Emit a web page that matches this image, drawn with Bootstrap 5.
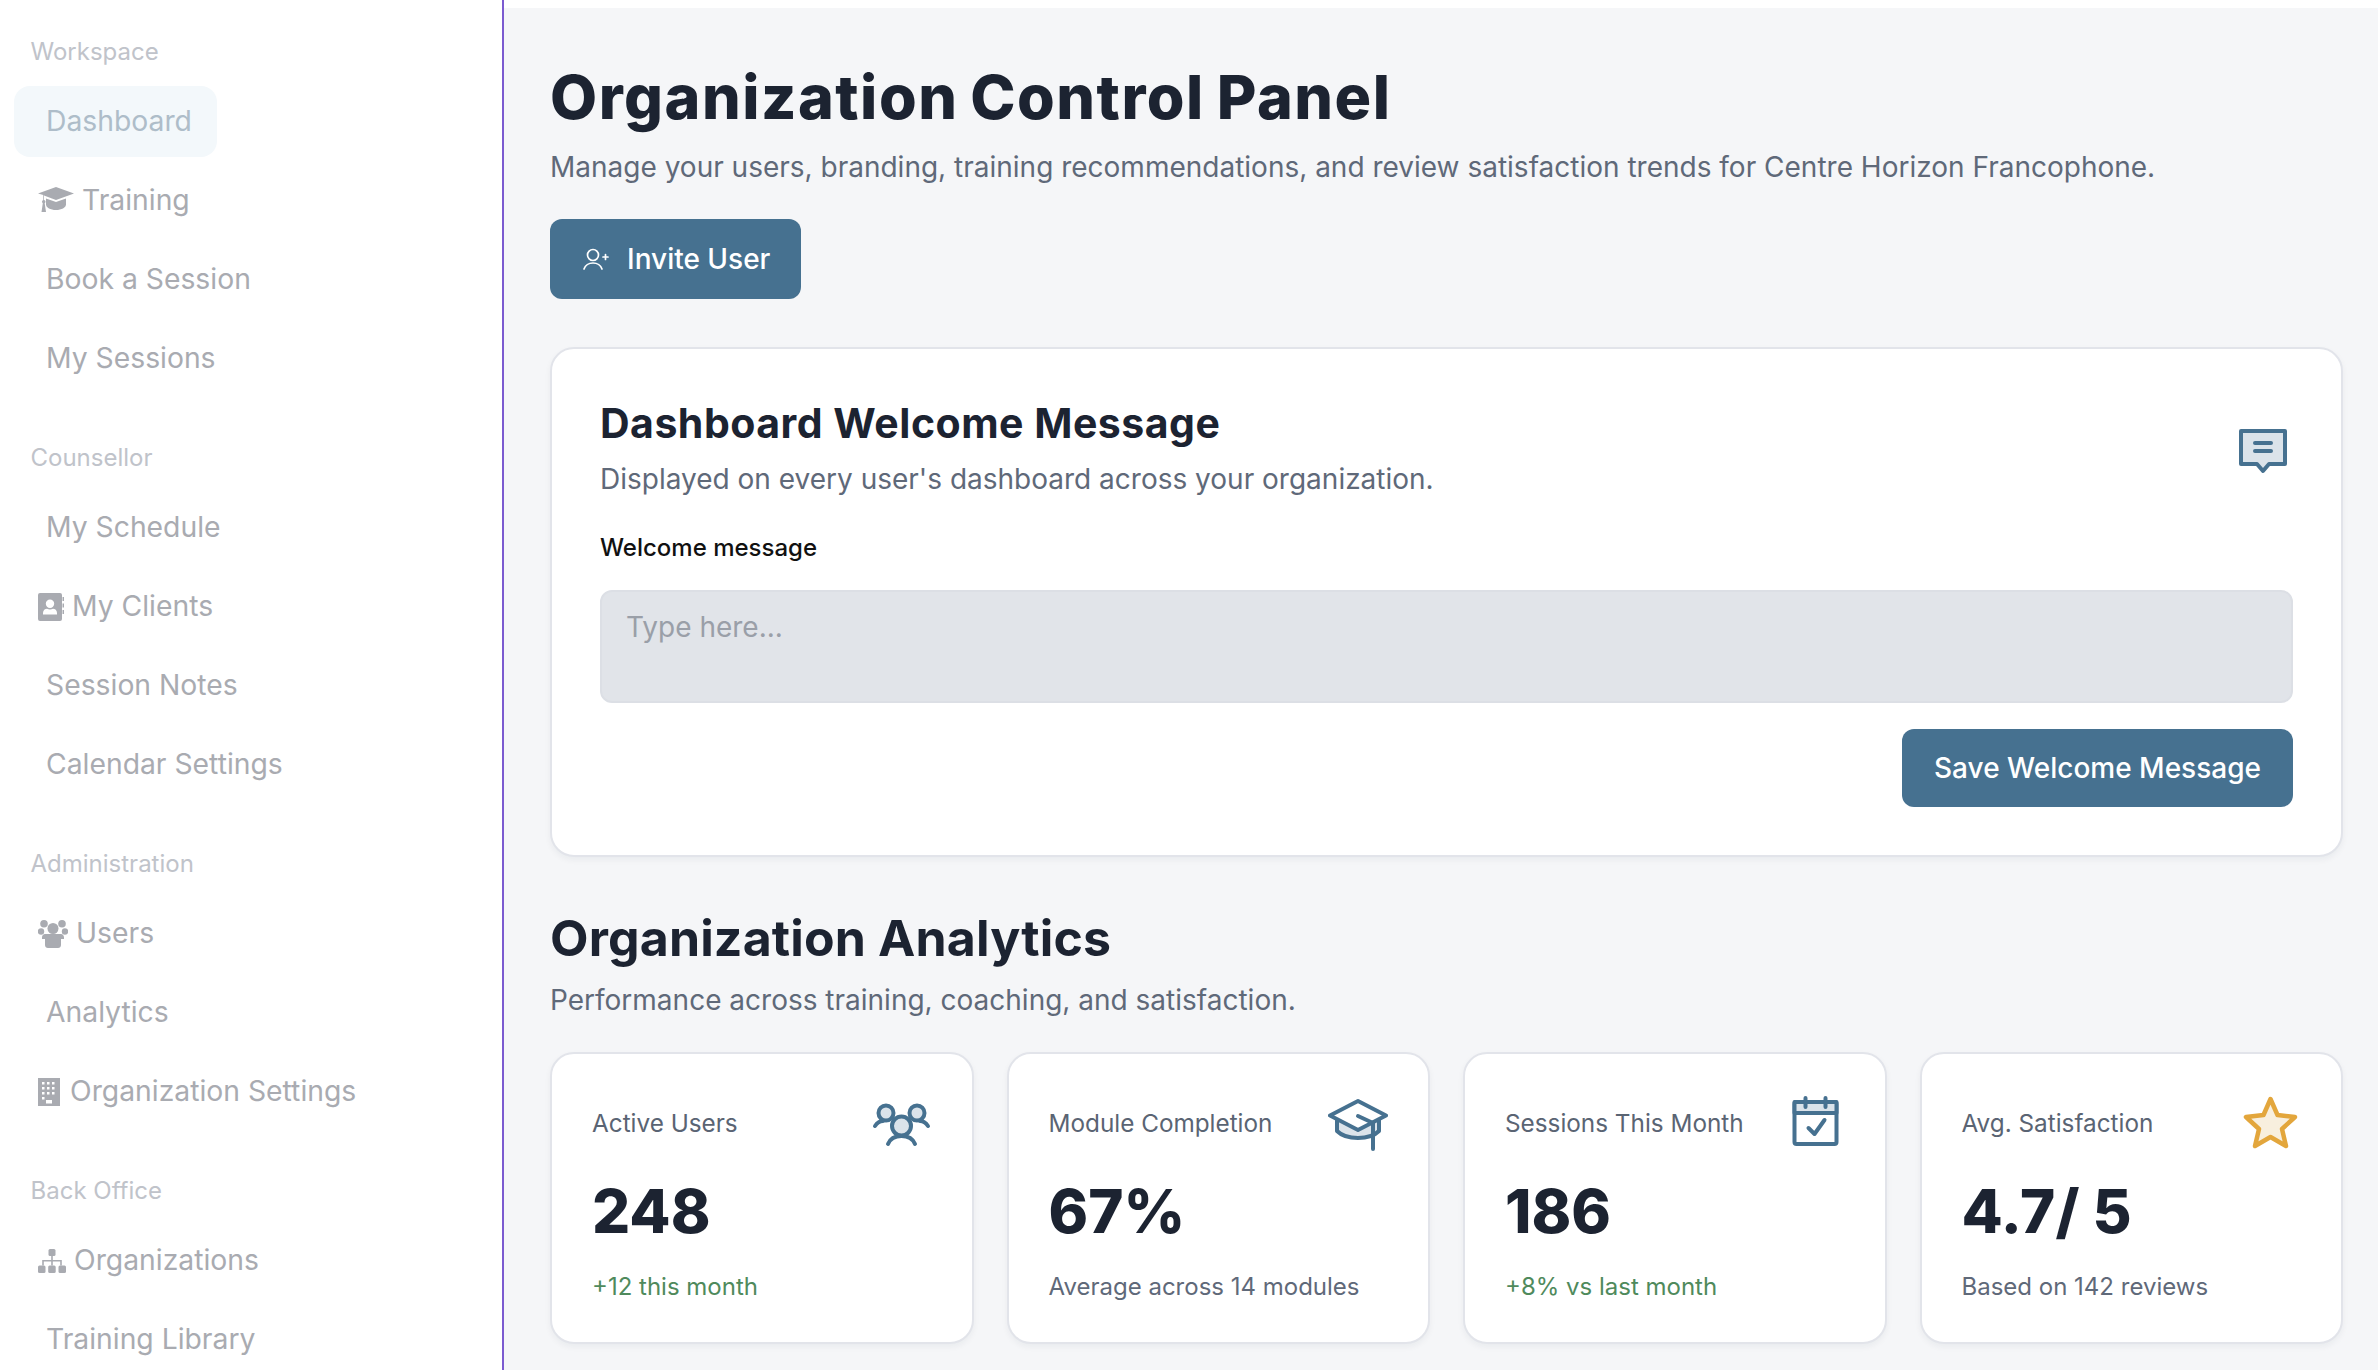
<!DOCTYPE html>
<html lang="en">
<head>
<meta charset="utf-8">
<title>Organization Control Panel</title>
<link rel="stylesheet" href="https://cdn.jsdelivr.net/npm/bootstrap@5.3.0/dist/css/bootstrap.min.css">
<style>
html,body{height:100%;margin:0}
body{font-family:Inter,"Liberation Sans",sans-serif;background:#fff;overflow:hidden}
.side-rail{width:504px;height:1370px;flex:none;border-right:2px solid #7b5bd0;padding:34px 0 0 14px;overflow:hidden;background:#fff}
.side-title{font-size:24px;line-height:36px;color:#c0c3ca;padding-left:16.5px;margin:0 0 16px}
.side-group{margin-bottom:46px;gap:8px}
.side-link{display:flex;align-items:center;height:71px;font-size:28.3px;color:#a9abb1;padding-left:32px;text-decoration:none;border-radius:16px;align-self:flex-start}
.side-link.with-icon{padding-left:24px;gap:8px}
.side-link.current{background:#f3f8fb;color:#aebdc9;padding-right:25px}
.side-link svg{fill:#a9abb1;display:block;flex:none}
.main-pane{flex:1 1 auto;margin-top:8px;background:#f5f6f8;padding:27px 35px 0 46px;overflow:hidden}
.page-title{font-size:61px;line-height:72px;font-weight:800;color:#1c2331;margin:26px 0 0;letter-spacing:1.5px;word-spacing:-3px}
.page-sub{font-size:28px;line-height:40px;color:#5f6979;margin:14px 0 32px}
.action-btn{background:#467190;border:0;color:#fff;font-size:28px;font-weight:500;border-radius:12px;display:inline-flex;align-items:center;height:80px;gap:18px}
.invite-btn{width:251px;padding:0 0 0 33px}
.save-btn{width:391px;height:78px;justify-content:center}
.panel-box{background:#fff;border:2px solid #e2e4ea;border-radius:24px;box-shadow:0 3px 6px rgba(20,30,50,.05)}
.welcome-box{margin-top:48px;height:510px;padding:44px 48px 0}
.box-title{font-size:41px;line-height:60px;font-weight:700;color:#1c2331;margin:0;letter-spacing:.5px}
.box-sub{font-size:28px;line-height:40px;color:#5f6979;margin:6px 0 0}
.chat-mark{margin:35px 5px 0 0;flex:none}
.field-label{font-size:24px;line-height:36px;font-weight:500;color:#111;margin:31px 0 24px;display:block}
.msg-area{height:113px;background:#e1e4e9;border:2px solid #dcdfe5;border-radius:12px;font-size:28px;padding:14px 24px;color:#333;resize:none}
.msg-area::placeholder{color:#9a9fa8}
.msg-area:focus{background:#e1e4e9}
.save-row{margin-top:26px}
.section-head{font-size:50px;line-height:60px;font-weight:700;color:#1c2331;margin:51px 0 0;letter-spacing:.15px}
.section-sub{font-size:28px;line-height:40px;color:#5f6979;margin:12px 0 32px}
.stat-row{--bs-gutter-x:33px;margin-left:-16.5px;margin-right:-16.5px}
.stat-box{height:292px;padding:39px 40px 0}
.stat-label{font-size:24.3px;line-height:36px;color:#5a6473;margin:0}
.stat-value{font-size:60px;line-height:72px;font-weight:800;color:#1c2331;margin:21.5px 0 0}
.stat-note{font-size:24px;line-height:36px;color:#5f6979;margin:22px 0 0}
.stat-note.up{color:#4f8a5c}
</style>
</head>
<body class="d-flex">
<aside class="side-rail">
  <p class="side-title">Workspace</p>
  <nav class="nav flex-column side-group">
    <a class="side-link current" href="#">Dashboard</a>
    <a class="side-link with-icon" href="#"><svg width="36" height="30" viewBox="0 0 36 30"><path d="M18 1 36 7.500 18 14 6 9.600V14c1 .4 1.500 1 1.500 1.800 0 .6-.3 1.100-.8 1.500L8 26H3.500l1.300-8.700c-.5-.4-.8-.9-.8-1.500 0-.8.600-1.400 1.300-1.800V8.900L0 7.500zM8 12.500l10 3.600 10-3.600v6c0 3-4.500 5.500-10 5.500S8 21.500 8 18.500z"/></svg>Training</a>
    <a class="side-link" href="#">Book a Session</a>
    <a class="side-link" href="#">My Sessions</a>
  </nav>
  <p class="side-title">Counsellor</p>
  <nav class="nav flex-column side-group">
    <a class="side-link" href="#">My Schedule</a>
    <a class="side-link with-icon" href="#"><svg width="26" height="28" viewBox="0 0 26 28"><path fill-rule="evenodd" d="M2 0h20a2 2 0 0 1 2 2v24a2 2 0 0 1-2 2H2a2 2 0 0 1-2-2V2a2 2 0 0 1 2-2zm10 6.500a4.200 4.200 0 1 0 0 8.400 4.200 4.200 0 0 0 0-8.400zM5 21.500h14v-1.600c0-2.600-2-4.200-4-4.200-1 .5-1.900.8-3 .8s-2-.3-3-.8c-2 0-4 1.600-4 4.200z"/><path d="M24.500 4H26v4h-1.500zM24.500 10.500H26v4h-1.500zM24.500 17H26v4h-1.500z"/></svg>My Clients</a>
    <a class="side-link" href="#">Session Notes</a>
    <a class="side-link" href="#">Calendar Settings</a>
  </nav>
  <p class="side-title">Administration</p>
  <nav class="nav flex-column side-group">
    <a class="side-link with-icon" href="#"><svg width="30" height="28" viewBox="0 0 30 28"><circle cx="15" cy="8.500" r="5.500"/><circle cx="6" cy="3.800" r="3.800"/><circle cx="24" cy="3.800" r="3.800"/><circle cx="3" cy="11.500" r="3.200"/><circle cx="27" cy="11.500" r="3.200"/><path d="M4 17.500c0-2 1.500-3.500 3-3.500h16c1.500 0 3 1.500 3 3.500v1.500h-3v6c0 1.700-1.300 3-3 3H10c-1.700 0-3-1.300-3-3v-6H4z"/></svg>Users</a>
    <a class="side-link" href="#">Analytics</a>
    <a class="side-link with-icon" href="#"><svg width="24" height="28" viewBox="0 0 24 28"><path fill-rule="evenodd" d="M0 0h22v28H0zM4 4v2.500h2.500V4zm5 0v2.500h2.500V4zm5 0v2.500h2.500V4h-2.500zM4 9v2.500h2.500V9zm5 0v2.500h2.500V9zm5 0v2.500h2.500V9h-2.500zM4 14v2.500h2.500V14zm5 0v2.500h2.500V14zm5 0v2.500h2.500V14h-2.500zM4 19v2.500h2.500V19zm4 3v3.500h6V22z"/></svg>Organization Settings</a>
  </nav>
  <p class="side-title">Back Office</p>
  <nav class="nav flex-column side-group">
    <a class="side-link with-icon" href="#"><svg width="28" height="24" viewBox="0 0 28 24"><rect x="10.500" y="0" width="7" height="7" rx="1.500"/><rect x="0" y="16.500" width="7.500" height="7.500" rx="1.500"/><rect x="10.200" y="16.500" width="7.500" height="7.500" rx="1.500"/><rect x="20.500" y="16.500" width="7.500" height="7.500" rx="1.500"/><path d="M13.200 7h1.600v4h9v5.500h-1.600v-4H14.800v4h-1.600v-4H5.800v4H4.200V11h9z"/></svg>Organizations</a>
    <a class="side-link" href="#">Training Library</a>
  </nav>
</aside>
<main class="main-pane">
  <h1 class="page-title">Organization Control Panel</h1>
  <p class="page-sub">Manage your users, branding, training recommendations, and review satisfaction trends for Centre Horizon Francophone.</p>
  <button class="btn action-btn invite-btn" type="button"><svg width="26" height="22" viewBox="0 0 26 22" fill="none" stroke="#fff" stroke-width="1.700" stroke-linecap="round"><circle cx="10" cy="7" r="5.500"/><path d="M1 21c1.500-4 5-6 9-6s7.500 2 9 6M20 9h5M22.500 6.500v5"/></svg>Invite User</button>

  <section class="panel-box welcome-box">
    <div class="d-flex justify-content-between">
      <div>
        <h2 class="box-title">Dashboard Welcome Message</h2>
        <p class="box-sub">Displayed on every user's dashboard across your organization.</p>
      </div>
      <svg class="chat-mark" width="50" height="46" viewBox="0 0 50 46"><path d="M3 3h44v33H31l-6 7-6-7H3z" fill="#dbe3ea" stroke="#467190" stroke-width="4" stroke-linejoin="round"/><path d="M17 15h16M17 23h16" stroke="#467190" stroke-width="4" stroke-linecap="round"/></svg>
    </div>
    <label class="field-label" for="welcomeMsg">Welcome message</label>
    <textarea id="welcomeMsg" class="form-control msg-area" placeholder="Type here..."></textarea>
    <div class="d-flex justify-content-end save-row">
      <button class="btn action-btn save-btn" type="button">Save Welcome Message</button>
    </div>
  </section>

  <h2 class="section-head">Organization Analytics</h2>
  <p class="section-sub">Performance across training, coaching, and satisfaction.</p>

  <div class="row row-cols-4 stat-row">
    <div class="col">
      <div class="panel-box stat-box">
        <div class="d-flex justify-content-between align-items-center">
          <p class="stat-label">Active Users</p>
          <svg width="60" height="60" viewBox="0 2 60 60" fill="none" stroke="#467190" stroke-width="4" stroke-linecap="round"><circle cx="14" cy="22" r="7.500" fill="#dbe3ea"/><circle cx="45" cy="22" r="7.500" fill="#dbe3ea"/><path d="M3 35c2-3 5-5 8-5M56 35c-2-3-5-5-8-5"/><circle cx="29.500" cy="35" r="9.500" fill="#dbe3ea"/><path d="M16 53c2-5 7-8 13.500-8S41 48 43 53"/></svg>
        </div>
        <div class="stat-value">248</div>
        <p class="stat-note up">+12 this month</p>
      </div>
    </div>
    <div class="col">
      <div class="panel-box stat-box">
        <div class="d-flex justify-content-between align-items-center">
          <p class="stat-label">Module Completion</p>
          <svg width="60" height="60" viewBox="0 2 60 60" fill="none" stroke="#467190" stroke-width="4" stroke-linecap="round" stroke-linejoin="round"><path d="M9 26v14c5 5 12 7 21 7s16-2 21-7V26L30 37z" fill="#dbe3ea"/><path d="M30 10 58 24.500 30 39 2 24.500z" fill="#fff"/><path d="M30 25 45 32v26"/></svg>
        </div>
        <div class="stat-value">67%</div>
        <p class="stat-note">Average across 14 modules</p>
      </div>
    </div>
    <div class="col">
      <div class="panel-box stat-box">
        <div class="d-flex justify-content-between align-items-center">
          <p class="stat-label">Sessions This Month</p>
          <svg width="60" height="60" viewBox="0.500 1 60 60" fill="none" stroke="#467190" stroke-width="4" stroke-linecap="round" stroke-linejoin="round"><rect x="10" y="10" width="42" height="42" rx="2"/><path d="M10 10h42v11H10z" fill="#dbe3ea"/><path d="M21 6v9M41 6v9"/><path d="M24 36l6 6 10-14"/></svg>
        </div>
        <div class="stat-value">186</div>
        <p class="stat-note up">+8% vs last month</p>
      </div>
    </div>
    <div class="col">
      <div class="panel-box stat-box">
        <div class="d-flex justify-content-between align-items-center">
          <p class="stat-label">Avg. Satisfaction</p>
          <svg width="60" height="60" viewBox="0 2 60 60" fill="#f8efde" stroke="#e3a63c" stroke-width="4.500" stroke-linejoin="round"><path d="M29.500 8l7 16 17.500 2-13 12 4 17-15.500-9-15.500 9 4-17-13-12 17.500-2z"/></svg>
        </div>
        <div class="stat-value">4.7/ 5</div>
        <p class="stat-note">Based on 142 reviews</p>
      </div>
    </div>
  </div>
</main>
<script src="https://cdn.jsdelivr.net/npm/bootstrap@5.3.0/dist/js/bootstrap.bundle.min.js"></script>
</body>
</html>
